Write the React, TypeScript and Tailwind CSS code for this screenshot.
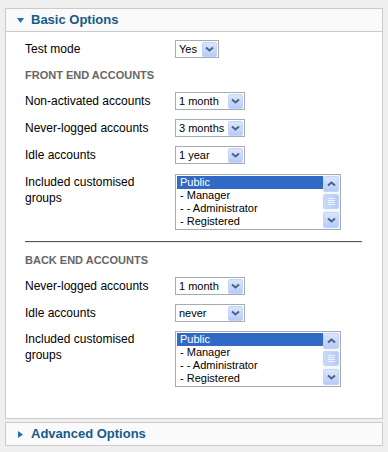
const font = { fontFamily: '"Liberation Sans", Arial, sans-serif' }

function Chevron({ up = false }: { up?: boolean }) {
  return (
    <svg width="9" height="6" viewBox="0 0 9 6" className={up ? 'rotate-180' : ''}>
      <path d="M1 1.5 L4.5 4.5 L8 1.5" fill="none" stroke="#4d6185" strokeWidth="2" />
    </svg>
  )
}

function XpButton({ up = false, className = '' }: { up?: boolean; className?: string }) {
  return (
    <div
      className={`flex items-center justify-center rounded-[2px] border border-[#c3d3fd] bg-gradient-to-b from-[#dbe6fd] to-[#b7cbf8] ${className}`}
    >
      <Chevron up={up} />
    </div>
  )
}

function Select({ value, width }: { value: string; width: string }) {
  return (
    <div className={`flex h-[18px] ${width} items-center border border-[#a5acb2] bg-white pl-[3px] pr-px`}>
      <span className="flex-1 text-[11px] leading-none text-black">{value}</span>
      <XpButton className="h-[15px] w-[15px]" />
    </div>
  )
}

function ListBox() {
  const items = ['Public', '- Manager', '- - Administrator', '- Registered']
  return (
    <div className="flex h-[56px] w-[166px] border border-[#a5acb2] bg-white">
      <div className="flex-1 pt-px pl-px">
        {items.map((item, i) => (
          <div
            key={item}
            className={`h-[13px] pl-[3px] text-[11px] leading-[13px] ${i === 0 ? 'bg-[#316ac5] text-white' : 'text-black'}`}
          >
            {item}
          </div>
        ))}
      </div>
      <div className="flex w-[17px] flex-col bg-[#f7f7f3] pt-px pb-px">
        <XpButton up className="h-[16px] w-[16px]" />
        <div className="mt-[2px] flex h-[15px] w-[16px] flex-col items-center justify-center gap-px rounded-[2px] border border-[#c3d3fd] bg-gradient-to-r from-[#cad9fc] to-[#b7cbf8]">
          <div className="h-px w-[7px] bg-[#eef3fe]" />
          <div className="h-px w-[7px] bg-[#eef3fe]" />
          <div className="h-px w-[7px] bg-[#eef3fe]" />
          <div className="h-px w-[7px] bg-[#eef3fe]" />
        </div>
        <div className="flex-1" />
        <XpButton className="h-[16px] w-[16px]" />
      </div>
    </div>
  )
}

function Row({ label, children }: { label: React.ReactNode; children: React.ReactNode }) {
  return (
    <div className="flex items-start">
      <div className="w-[150px] text-[12px] leading-[16px] text-black">{label}</div>
      {children}
    </div>
  )
}

function SimpleRow({ label, children }: { label: string; children: React.ReactNode }) {
  return (
    <div className="flex h-[18px] items-center">
      <div className="w-[150px] text-[12px] leading-[16px] text-black">{label}</div>
      {children}
    </div>
  )
}

function Heading({ children }: { children: string }) {
  return <div className="my-[10px] h-[14px] text-[11px] font-bold leading-[14px] text-[#666]">{children}</div>
}

function PanelHeader({ title, open }: { title: string; open: boolean }) {
  return (
    <div className="flex h-[22px] items-center bg-[#fafafa] pl-[11px]">
      <svg width="7" height="7" viewBox="0 0 7 7" className="mr-[7px]">
        {open ? <path d="M0 1 L7 1 L3.5 6 Z" fill="#1f72b0" /> : <path d="M1 0 L6 3.5 L1 7 Z" fill="#1f72b0" />}
      </svg>
      <span className="text-[13px] font-bold text-[#155a8a]">{title}</span>
    </div>
  )
}

export default function App() {
  return (
    <div className="h-[452px] w-[388px] bg-[#efefef] pt-[8px] pl-[5px]" style={font}>
      <div className="w-[378px] border border-[#cbcbcb] bg-white">
        <PanelHeader title="Basic Options" open />
        <div className="border-t border-[#cbcbcb] pt-[8px] pr-[20px] pb-[31px] pl-[19px]">
          <SimpleRow label="Test mode">
            <Select value="Yes" width="w-[44px]" />
          </SimpleRow>
          <Heading>FRONT END ACCOUNTS</Heading>
          <div className="flex flex-col gap-[9px]">
            <SimpleRow label="Non-activated accounts">
              <Select value="1 month" width="w-[70px]" />
            </SimpleRow>
            <SimpleRow label="Never-logged accounts">
              <Select value="3 months" width="w-[70px]" />
            </SimpleRow>
            <SimpleRow label="Idle accounts">
              <Select value="1 year" width="w-[70px]" />
            </SimpleRow>
          </div>
          <div className="mt-[10px]">
            <Row label={<>Included customised<br />groups</>}>
              <ListBox />
            </Row>
          </div>
          <div className="mt-[11px] h-[2px] border-t border-b border-t-[#555] border-b-[#ececec]" />
          <Heading>BACK END ACCOUNTS</Heading>
          <div className="flex flex-col gap-[9px]">
            <SimpleRow label="Never-logged accounts">
              <Select value="1 month" width="w-[70px]" />
            </SimpleRow>
            <SimpleRow label="Idle accounts">
              <Select value="never" width="w-[70px]" />
            </SimpleRow>
          </div>
          <div className="mt-[9px]">
            <Row label={<>Included customised<br />groups</>}>
              <ListBox />
            </Row>
          </div>
        </div>
      </div>
      <div className="mt-[3px] w-[378px] border border-[#cbcbcb]">
        <PanelHeader title="Advanced Options" open={false} />
      </div>
    </div>
  )
}
